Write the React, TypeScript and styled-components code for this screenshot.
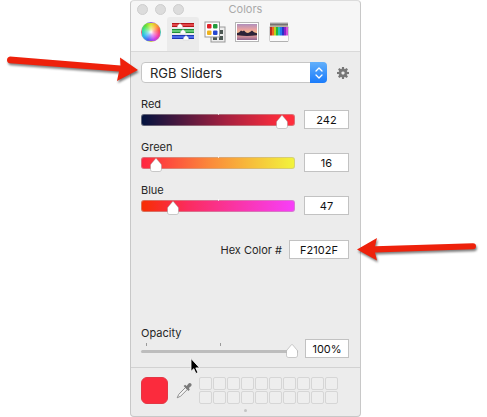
import React, { useId, useState } from "react";
import styled, { createGlobalStyle, css } from "styled-components";

const GlobalStyle = createGlobalStyle`
  * { box-sizing: border-box; }
  body {
    margin: 0;
    background: #fff;
    color: #262626;
    font-family: Inter, "Liberation Sans", sans-serif;
    font-size: 11px;
    overflow-x: hidden;
  }
  button, input, select { font: inherit; color: inherit; margin: 0; }
`;

const Page = styled.main`
  display: grid;
  grid-template-columns: 130fr 231fr 126fr;
`;

const Panel = styled.section`
  grid-column: 2;
  min-width: 231px;
  background: #ececec;
  border: 1px solid #c8c8c8;
  border-top-color: #dcdcdc;
  border-radius: 4px;
`;

const Header = styled.header`
  background: #f6f6f6;
  border-bottom: 1px solid #d9d9d9;
  border-radius: 4px 4px 0 0;
`;

const TitleBar = styled.div`
  display: grid;
  grid-template-columns: 1fr auto 1fr;
  align-items: center;
  height: 16px;
  padding: 0 6px;
`;

const Lights = styled.div`
  display: flex;
  gap: 7px;
`;

const Light = styled.button`
  width: 11px;
  height: 11px;
  padding: 0;
  border: 1px solid #cecece;
  border-radius: 50%;
  background: #dcdcdc;
`;

const Title = styled.h1`
  margin: 0;
  color: #a9a9a9;
  font-size: 11px;
  font-weight: 400;
  line-height: 16px;
`;

const Toolbar = styled.nav`
  display: flex;
  height: 34px;
  padding-left: 4px;
`;

const Tool = styled.button<{ $active?: boolean }>`
  display: grid;
  place-items: center;
  width: 32px;
  padding: 0 0 5px;
  border: 0;
  border-radius: 3px 3px 0 0;
  background: ${(p) => (p.$active ? "#ebebeb" : "transparent")};
`;

const Wheel = styled.span`
  width: 20px;
  height: 20px;
  border: 1px solid #9999994d;
  border-radius: 50%;
  background:
    radial-gradient(circle, #fff 0%, #ffffff80 25%, transparent 65%),
    conic-gradient(from 0deg, #d8e52c, #ffa52c, #ff4a4c, #f637a8, #c03cf5, #4a5df6, #21b8f0, #2fdca0, #5ce32f, #d8e52c);
`;

const Body = styled.div`
  padding: 10px 11px 9px 10px;
`;

const Row = styled.div<{ $gap: number; $top?: number }>`
  position: relative;
  display: flex;
  align-items: center;
  justify-content: flex-end;
  gap: ${(p) => p.$gap}px;
  margin-top: ${(p) => p.$top ?? 0}px;
`;

const Picker = styled.div`
  position: relative;
  flex: 1;
  display: flex;
  height: 21px;
`;

const Select = styled.select`
  appearance: none;
  width: 100%;
  padding: 0 24px 0 8px;
  border: 1px solid #c6c6c6;
  border-radius: 4px;
  background: #fff;
  font-size: 13px;
`;

const PickerCap = styled.span`
  position: absolute;
  inset: 0 0 0 auto;
  display: grid;
  place-items: center;
  width: 17px;
  border-radius: 0 4px 4px 0;
  background: linear-gradient(#62b0fb, #1a7bfb);
  pointer-events: none;
`;

const IconButton = styled.button`
  display: grid;
  place-items: center;
  padding: 0;
  border: 0;
  background: none;
`;

const Field = styled.div<{ $top: number }>`
  margin-top: ${(p) => p.$top}px;
`;

const Label = styled.label`
  display: block;
  line-height: 12px;
`;

const ValueBox = styled.input<{ $width: number }>`
  width: ${(p) => p.$width}px;
  height: 19px;
  padding: 0;
  border: 1px solid #c2c2c2;
  border-radius: 0;
  background: #fff;
  color: #111;
  text-align: center;
`;

const Slider = styled.div`
  position: relative;
  flex: 1;
  display: flex;
  align-items: center;
  height: 19px;
`;

const flatTrack = css`
  height: 3px;
  margin-top: 6px;
  background: #bdbdbd;
`;

const colourTrack = css<{ $fill?: string }>`
  height: 12px;
  border: 1px solid #b9b1ae80;
  background: linear-gradient(to right, ${(p) => p.$fill}) border-box;
`;

const Range = styled.input<{ $fill?: string }>`
  appearance: none;
  width: 100%;
  border-radius: 3px;
  ${(p) => (p.$fill ? colourTrack : flatTrack)}
  &::-webkit-slider-thumb {
    appearance: none;
    width: 12px;
    height: 14px;
    opacity: 0;
  }
`;

const Tick = styled.span<{ $at: string; $dark?: boolean }>`
  position: absolute;
  top: ${(p) => (p.$dark ? 4 : 3)}px;
  left: ${(p) => p.$at};
  width: 1px;
  height: ${(p) => (p.$dark ? 3 : 2)}px;
  background: ${(p) => (p.$dark ? "#9a9a9a" : "#ffffffb0")};
  pointer-events: none;
`;

const KnobSvg = styled.svg`
  position: absolute;
  top: 5px;
  transform: translateX(-50%);
  pointer-events: none;
  overflow: visible;
`;

const Arrow = styled.svg<{ $side: "left" | "right" }>`
  position: absolute;
  ${(p) => (p.$side === "left" ? "right: calc(100% + 3px); top: -9px;" : "left: calc(100% + 8px); top: -7px;")}
  overflow: visible;
  filter: drop-shadow(1px 2px 1px #00000080);
  pointer-events: none;
`;

const Cursor = styled.svg`
  position: absolute;
  left: 49px;
  top: 19px;
  z-index: 1;
  overflow: visible;
  pointer-events: none;
`;

const Footer = styled.footer`
  display: grid;
  grid-template-columns: 27px 16px auto 1fr;
  align-items: center;
  column-gap: 8px;
  padding: 9px 10px 4px;
  border-top: 1px solid #d2d2d2;
`;

const Swatch = styled.button<{ $color: string }>`
  height: 27px;
  border: 1px solid #e33745;
  border-radius: 6px;
  background: ${(p) => p.$color};
`;

const Wells = styled.div`
  display: grid;
  grid-template-columns: repeat(10, 13px);
  grid-auto-rows: 13px;
  gap: 1px;
  margin-left: -1px;
`;

const Well = styled.button`
  padding: 0;
  border: 1px solid #d6d6d6;
  border-radius: 2px;
  background: #eeeeee;
`;

const Grip = styled.span`
  grid-column: 1 / -1;
  justify-self: center;
  width: 3px;
  height: 3px;
  margin-top: 5px;
  border-radius: 50%;
  background: #c4c4c4;
`;

function Knob({ ratio }: { ratio: number }) {
  return (
    <KnobSvg width="12" height="14" viewBox="0 0 12 14" style={{ left: `calc(6px + (100% - 12px) * ${ratio})` }}>
      <path
        d="M6 .5C6.6.5 7 1.2 7.6 2l3.2 3.8c.5.6.7 1 .7 1.700v3.700c0 1.500-.8 2.300-2.300 2.300H2.800C1.300 13.500.5 12.700.5 11.200V7.500c0-.7.2-1.100.7-1.700L4.400 2C5 1.200 5.400.5 6 .5z"
        fill="#fff"
        stroke="#8b8b8b"
        strokeOpacity=".55"
        strokeWidth=".8"
      />
    </KnobSvg>
  );
}

type ChannelProps = { name: string; value: number; onChange: (n: number) => void; fill: string; top: number };

function Channel({ name, value, onChange, fill, top }: ChannelProps) {
  const id = useId();
  return (
    <Field $top={top}>
      <Label htmlFor={id}>{name}</Label>
      <Row $gap={9}>
        <Slider>
          <Range id={id} type="range" min={0} max={255} value={value} $fill={fill} onChange={(e) => onChange(Number(e.target.value))} />
          <Tick $at="50%" />
          <Knob ratio={value / 255} />
        </Slider>
        <ValueBox $width={45} aria-label={`${name} value`} value={value} onChange={(e) => onChange(Math.min(255, Number(e.target.value) || 0))} />
      </Row>
    </Field>
  );
}

const SlidersIcon = () => (
  <svg width="22" height="19" viewBox="0 0 22 19">
    {[
      { y: 1, dark: "#b5151a", light: "#e2484a", k: 8 },
      { y: 7, dark: "#1f8f38", light: "#62c873", k: 11 },
      { y: 13, dark: "#1f37b4", light: "#4b6ae6", k: 14 },
    ].map(({ y, dark, light, k }) => (
      <g key={y}>
        <rect x="0" y={y} width="22" height="4" fill={light} />
        <path d={`M0 ${y + 0.5}h22M0 ${y + 3.5}h22`} stroke={dark} />
        <path d={`M${k} ${y + 0.6}q2.800 1.700 2.800 3.400v1h-5.600v-1q0-1.700 2.800-3.400z`} fill="#fff" stroke="#bbb" strokeWidth=".3" />
      </g>
    ))}
  </svg>
);

const PalettesIcon = () => (
  <svg width="22" height="22" viewBox="0 0 22 22">
    <rect x="7" y="6" width="14" height="15" fill="#ededed" stroke="#999" />
    <path d="M15 9h4v4h-4zM15 15h4v4h-4zM9 15h4v4H9z" fill="#4b5752" />
    <rect x="1" y="1" width="14.500" height="15" fill="#fff" stroke="#999" />
    <rect x="3" y="3" width="4.500" height="4.500" rx="1" fill="#e02128" />
    <rect x="9" y="3" width="4.500" height="4.500" rx="1" fill="#239b3c" />
    <rect x="3" y="9.500" width="4.500" height="4.500" rx="1" fill="#efb31c" />
    <rect x="9" y="9.500" width="4.500" height="4.500" rx="1" fill="#2647cf" />
  </svg>
);

const PictureIcon = () => (
  <svg width="24" height="20" viewBox="0 0 24 20">
    <defs>
      <linearGradient id="sky" x1="0" y1="0" x2="0" y2="1">
        <stop offset="0" stopColor="#b08fbb" />
        <stop offset=".35" stopColor="#eba3a0" />
        <stop offset=".6" stopColor="#f9c683" />
        <stop offset=".75" stopColor="#d9949a" />
        <stop offset="1" stopColor="#8e6490" />
      </linearGradient>
    </defs>
    <rect x=".5" y=".5" width="23" height="19" fill="#fff" stroke="#b5b5b5" />
    <rect x="2" y="2" width="20" height="16" fill="url(#sky)" />
    <path d="M2 11l2-.5 2-2 1.500.7L9 8.500l2 2 2 .4 2-.9 2-1.500 2 1.800 3 .9v2l-5 .5-5 .2-5-.2-5-.4z" fill="#2c2238" />
  </svg>
);

const PencilsIcon = () => (
  <svg width="20" height="20" viewBox="0 0 20 20">
    <path d="M.5 5v13.500q0 1 1 1h17q1 0 1-1V5z" fill="#fafafa" stroke="#c4c4c4" strokeWidth=".8" />
    {["#b82a20", "#ef6a1e", "#b7d51f", "#24b73b", "#1fc4bd", "#2378ee", "#2a30c8", "#8a21c8", "#d04fd8"].map((c, i) => (
      <g key={c}>
        <path d={`M${1 + i * 2} 5.500l1-4 1 4z`} fill="#cdbd9f" stroke="#777" strokeWidth=".3" />
        <path d={`M${1.5 + i * 2} 3.200L${2 + i * 2} .4l.5 2.800z`} fill="#333" stroke="#333" strokeWidth=".3" />
        <rect x={1 + i * 2} y="5" width="2" height="8.500" fill={c} />
      </g>
    ))}
    <path d="M1 19.500h18" stroke="#aaa" strokeWidth=".8" />
  </svg>
);

const GearIcon = () => (
  <svg width="12" height="12" viewBox="-6 -6 12 12">
    {[0, 45, 90, 135, 180, 225, 270, 315].map((a) => (
      <path key={a} d="M-1.300-3.500L-1-6H1l.3 2.500z" fill="#777" transform={`rotate(${a})`} />
    ))}
    <circle r="2.900" fill="none" stroke="#777" strokeWidth="2.600" />
  </svg>
);

const DropperIcon = () => (
  <svg width="16" height="17" viewBox="0 0 16 17">
    <path d="M9.500 5.500L2.800 12.300 1.200 15.800l3.400-1.600L11.300 7.500z" fill="#f6f6f6" stroke="#8f8f8f" />
    <path d="M7.600 4l1.500-1.200 1.500 1.100 2-2.400c1.400-1.600 4.100.8 2.600 2.400l-2.300 2.200.9 1.500-1.300 1.300z" fill="#7a7a7a" />
  </svg>
);

const hex = (n: number) => n.toString(16).toUpperCase().padStart(2, "0");

export default function App() {
  const [mode, setMode] = useState("RGB Sliders");
  const [red, setRed] = useState(242);
  const [green, setGreen] = useState(16);
  const [blue, setBlue] = useState(47);
  const [opacity, setOpacity] = useState(100);
  const code = hex(red) + hex(green) + hex(blue);

  return (
    <>
      <GlobalStyle />
      <Page>
        <Panel aria-label="Colors">
          <Header>
            <TitleBar>
              <Lights>
                <Light aria-label="Close" />
                <Light aria-label="Minimize" />
                <Light aria-label="Zoom" />
              </Lights>
              <Title>Colors</Title>
            </TitleBar>
            <Toolbar>
              <Tool aria-label="Color wheel"><Wheel /></Tool>
              <Tool aria-label="Color sliders" $active><SlidersIcon /></Tool>
              <Tool aria-label="Color palettes"><PalettesIcon /></Tool>
              <Tool aria-label="Image palettes"><PictureIcon /></Tool>
              <Tool aria-label="Pencils"><PencilsIcon /></Tool>
            </Toolbar>
          </Header>
          <Body>
            <Row $gap={10}>
              <Picker>
                <Select aria-label="Slider type" value={mode} onChange={(e) => setMode(e.target.value)}>
                  <option>RGB Sliders</option>
                </Select>
                <PickerCap>
                  <svg width="8" height="12" viewBox="0 0 8 12" fill="none" stroke="#fff" strokeWidth="1.300" strokeLinecap="round" strokeLinejoin="round">
                    <path d="M1 4l3-3 3 3M1 8l3 3 3-3" />
                  </svg>
                </PickerCap>
              </Picker>
              <IconButton aria-label="Options"><GearIcon /></IconButton>
              <Arrow $side="left" width="131" height="30" viewBox="0 0 131 30" aria-hidden="true">
                <path d="M3 3.500Q0 4 0 7t3 3.200L112 18.500 110 28 131 17 113 4.500l.5 8z" fill="#ee210b" />
              </Arrow>
            </Row>
            <Channel name="Red" value={red} onChange={setRed} top={15} fill="#00123f, #a5203f 55%, #ff2d3c 92%" />
            <Channel name="Green" value={green} onChange={setGreen} top={12} fill="#ff2340, #fb8a3a 45%, #f2f53c" />
            <Channel name="Blue" value={blue} onChange={setBlue} top={12} fill="#f72e00, #fb2c5e 30%, #f73ffb" />
            <Row $gap={7} $top={25}>
              <Label htmlFor="hex">Hex Color #</Label>
              <ValueBox $width={60} id="hex" value={code} readOnly />
              <Arrow $side="right" width="119" height="25" viewBox="0 0 119 25" aria-hidden="true">
                <path d="M0 16.500L20 5l-2 8.200 98-3q3 0 3 3t-3 3L18 19.500l2 8z" fill="#ee210b" />
              </Arrow>
            </Row>
            <Field $top={68}>
              <Label htmlFor="opacity">Opacity</Label>
              <Row $gap={7}>
                <Slider>
                  <Range id="opacity" type="range" min={0} max={100} value={opacity} onChange={(e) => setOpacity(Number(e.target.value))} />
                  <Tick $at="5px" $dark />
                  <Tick $at="50%" $dark />
                  <Knob ratio={opacity / 100} />
                </Slider>
                <ValueBox $width={44} aria-label="Opacity value" value={`${opacity}%`} onChange={(e) => setOpacity(Math.min(100, parseInt(e.target.value) || 0))} />
                <Cursor width="11" height="17" viewBox="0 0 11 17" aria-hidden="true">
                  <path d="M1 .5v12.800l2.800-2.600 2.100 4.800 2-.9-2.100-4.700h3.800z" fill="#000" stroke="#fff" strokeWidth=".8" />
                </Cursor>
              </Row>
            </Field>
          </Body>
          <Footer>
            <Swatch $color="#fb2b3d" aria-label="Current color" />
            <IconButton aria-label="Pick color from screen"><DropperIcon /></IconButton>
            <Wells>
              {Array.from({ length: 20 }, (_, i) => (
                <Well key={i} aria-label={`Saved color ${i + 1}`} />
              ))}
            </Wells>
            <Grip />
          </Footer>
        </Panel>
      </Page>
    </>
  );
}
